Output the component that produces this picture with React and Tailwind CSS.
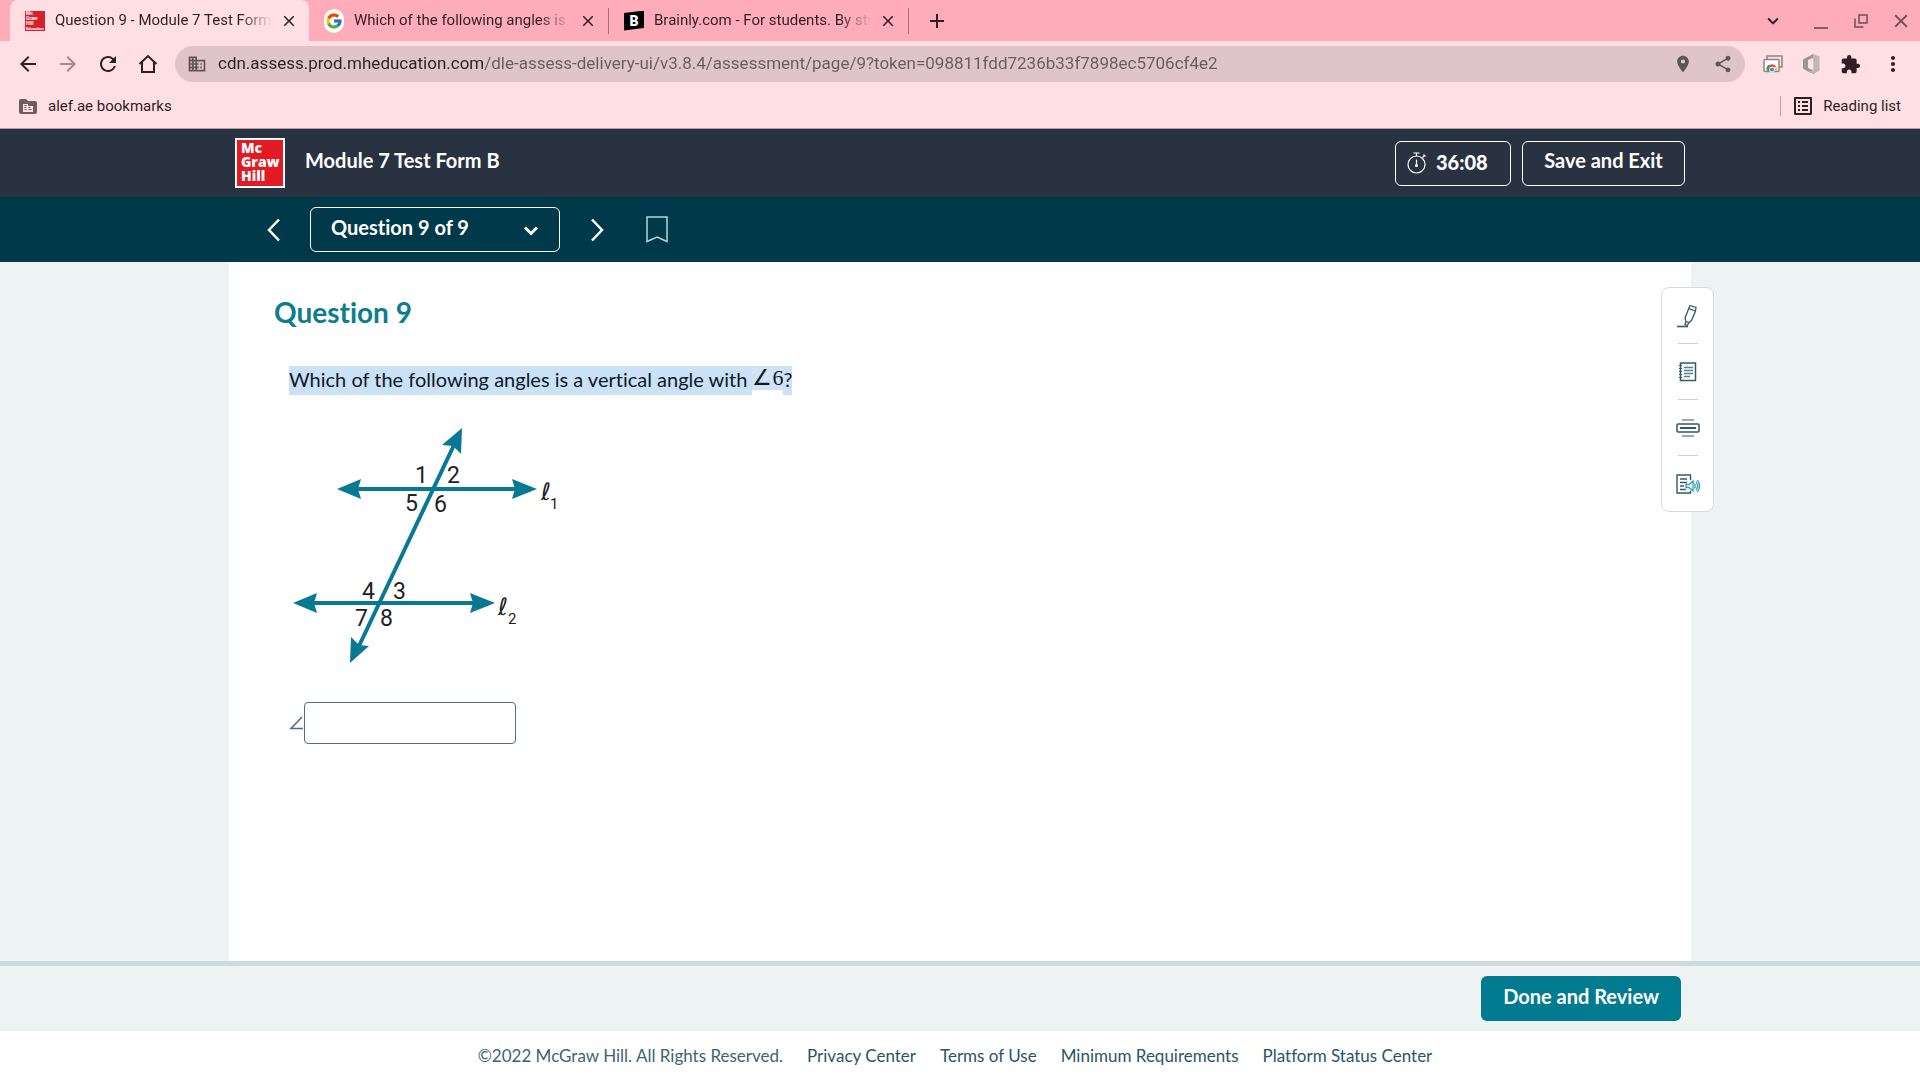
import { FcGoogle } from 'react-icons/fc';
import {
    MdAdd,
    MdArrowBack,
    MdArrowForward,
    MdClose,
    MdDomain,
    MdExpandMore,
    MdExtension,
    MdLocationOn,
    MdMoreVert,
    MdOutlineListAlt,
    MdRefresh,
    MdShare,
} from 'react-icons/md';

const tabs = [
    { title: 'Question 9 - Module 7 Test Form', icon: <SmallLogo />, active: true },
    { title: 'Which of the following angles is a', icon: <GoogleIcon /> },
    { title: 'Brainly.com - For students. By stu', icon: <BrainlyIcon /> },
];

const footerLinks = ['Privacy Center', 'Terms of Use', 'Minimum Requirements', 'Platform Status Center'];

const tools = [
    { label: 'Highlighter', icon: <HighlighterIcon /> },
    { label: 'Notepad', icon: <NotepadIcon /> },
    { label: 'Line reader', icon: <LineReaderIcon /> },
    { label: 'Text to speech', icon: <SpeechIcon /> },
];

function SmallLogo() {
    return (
        <span className="block size-5 bg-[#d6202e] pl-px text-left text-[5px] leading-[5px] font-bold text-white">
            Mc<br />Graw<br />Hill<br /><span className="block text-[4px] leading-[5px]">Education</span>
        </span>
    )
}

function GoogleIcon() {
    return (
        <span className="flex h-6 w-5 items-center justify-center rounded-full bg-white">
            <FcGoogle size={18} />
        </span>
    )
}

function BrainlyIcon() {
    return (
        <span className="flex size-5 items-center justify-center bg-black font-['Roboto',sans-serif] text-sm font-black text-white [clip-path:polygon(0_12%,100%_0,100%_88%,0_100%)]">
            B
        </span>
    )
}

function HomeIcon() {
    return (
        <svg width="20" height="20" viewBox="0 0 20 20" fill="none" stroke="currentColor" strokeWidth="2">
            <path d="M1.500 10 10 2l8.500 8M4 8v10h12V8" />
        </svg>
    )
}

function BookmarkFolderIcon() {
    return (
        <svg width="18" height="18" viewBox="0 0 18 18">
            <path d="M2 2h5l2 2h7a2 2 0 0 1 2 2v9a2 2 0 0 1-2 2H2a2 2 0 0 1-2-2V4a2 2 0 0 1 2-2z" fill="#6b5e61" />
            <path d="M4 7h5v2h5v6H4z" fill="#ffdee4" />
            <path d="M5.500 8.500h2M5.500 10.500h2M5.500 12.500h2M9.500 10.500h2M9.500 12.500h3" stroke="#6b5e61" />
        </svg>
    )
}

function ScreensIcon() {
    return (
        <svg width="20" height="18" viewBox="0 0 20 18" fill="none">
            <path d="M4 4V1h15v11h-3" stroke="#8e8587" strokeWidth="1.500" />
            <rect x="1" y="4.500" width="15" height="12" rx="1" fill="#fff" stroke="#8e8587" strokeWidth="1.500" />
            <path d="M4 16a5 5 0 0 1 2-6.500l2.500 6.500z" fill="#34a853" />
            <path d="M4.500 12a5 5 0 0 1 9 0z" fill="#ea4335" />
            <path d="M13.500 12a5 5 0 0 1 .5 4H9z" fill="#fbbc04" />
            <circle cx="9" cy="14.500" r="2.500" fill="#4285f4" stroke="#fff" />
        </svg>
    )
}

function OfficeIcon() {
    return (
        <svg width="17" height="20" viewBox="0 0 17 20">
            <path d="M0 5.500 10 0v4L5 6v8l5.500 2.500V20L5 17.500 0 14.500z" fill="#9d9596" />
            <path d="M10 0l6.500 2.500v14L10.500 20l-6-2.500 6-1z" fill="#bdb6b7" />
        </svg>
    )
}

function RestoreIcon() {
    return (
        <svg width="14" height="14" viewBox="0 0 14 14" fill="none" stroke="currentColor" strokeWidth="1.500">
            <path d="M5 1h8v8H5zM1 4.500V13h8.500" />
        </svg>
    )
}

function Chevron({ d }) {
    return (
        <svg width="14" height="24" viewBox="0 0 14 24" fill="none" stroke="currentColor" strokeWidth="2.500">
            <path d={d} />
        </svg>
    )
}

function TimerIcon() {
    return (
        <svg width="20" height="22" viewBox="0 0 20 22" fill="none" stroke="currentColor" strokeWidth="1.200">
            <circle cx="9.500" cy="12.500" r="8.500" />
            <path d="M6.500 1h6M9.500 1v3M15.500 5.500l2-2M16.500 2.500l2 2M9.500 7.500v5" />
            <circle cx="9.500" cy="13.500" r="1" fill="currentColor" />
        </svg>
    )
}

function HighlighterIcon() {
    return (
        <svg width="24" height="24" viewBox="0 0 24 24" fill="none" stroke="#35596a" strokeWidth="1.300">
            <path d="m14 1.500 6 2-.5 3.500-4 9.500-2.500 2-3-1 -1-3.500 3.500-9zM12.800 4.700l6.700 2.300M10 17.500l-1 3 2.500.8 1.500-2.800" />
            <path d="M1 22.500h11" strokeWidth="1.600" />
        </svg>
    )
}

function NotepadIcon() {
    return (
        <svg width="24" height="24" viewBox="0 0 24 24" fill="none" stroke="#35596a">
            <path d="M4.500 3h15v17.500h-15z" strokeWidth="1.500" />
            <path d="M8 7.500h9M8 10.500h9M8 13.500h9M8 16.500h6" stroke="#5c7d8a" strokeWidth="1.300" />
            <path d="M3 5.500h3M3 8.500h3M3 11.500h3M3 14.500h3M3 17.500h3" strokeWidth="1.200" />
        </svg>
    )
}

function LineReaderIcon() {
    return (
        <svg width="24" height="24" viewBox="0 0 24 24" fill="none" stroke="#35596a">
            <rect x="1" y="8" width="22" height="8" rx="1" strokeWidth="1.500" />
            <path d="M4 12h16" strokeWidth="2" />
            <path d="M6 4h12M6 20h12" strokeWidth="1.200" />
        </svg>
    )
}

function SpeechIcon() {
    return (
        <svg width="24" height="24" viewBox="0 0 24 24" fill="none" stroke="#35596a">
            <path d="M14.500 8V3H1v18h13.500v-2" strokeWidth="1.400" />
            <path d="M4 7h7M4 10.500h7M4 14h4M4 17.500h6" strokeWidth="1.300" />
            <g stroke="#2f9db5" strokeWidth="1.300">
                <path d="M10 12.500h3l4-3.500v10l-4-3.500h-3zM18.500 11.500q1.500 2.500 0 5M20 9.500q3 4.500 0 9M21.500 8q4 6 0 12" />
            </g>
        </svg>
    )
}

function AnglesFigure() {
    return (
        <svg
            role="img"
            aria-label="Two lines cut by a transversal"
            width="280"
            height="250"
            viewBox="0 0 280 250"
            className="block font-['Roboto',sans-serif]"
            fill="#222"
        >
            <g stroke="#087894" strokeWidth="4">
                <path d="M65 69h166M22 183h165M165 25 70 226" />
            </g>
            <g fill="#087894">
                <path d="M48 69l24-10-3 10 3 10zM248 69l-25-10 3 10-3 10z" />
                <path d="M4 183l24-10-3 10 3 10zM206 183l-25-10 3 10-3 10z" />
                <path d="M173 8l-20 17 11 1 8 8zM61 243l1-26 8 8 10 1z" />
            </g>
            <g fontSize="23">
                <text x="126" y="63">1</text>
                <text x="158" y="63">2</text>
                <text x="116" y="91">5</text>
                <text x="145" y="92">6</text>
                <text x="73" y="179">4</text>
                <text x="104" y="179">3</text>
                <text x="66" y="206">7</text>
                <text x="91" y="206">8</text>
            </g>
            <g className="font-['DejaVu_Sans',sans-serif]" fontSize="24">
                <text x="252" y="80">ℓ</text>
                <text x="209" y="195">ℓ</text>
            </g>
            <g fontSize="15">
                <text x="261" y="89">1</text>
                <text x="219" y="204">2</text>
            </g>
        </svg>
    )
}

function Tab({ title, icon, active }) {
    return (
        <div className={active
            ? 'flex h-full w-[299px] items-center rounded-t-lg bg-[#ffdee4] pr-[11px] pl-[15px]'
            : 'flex h-full w-[299px] items-center pr-[11px] pl-[15px]'}
        >
            <button role="tab" aria-selected={Boolean(active)} className="flex min-w-0 flex-1 items-center gap-[10px]">
                {icon}
                <span className="flex-1 overflow-hidden text-left whitespace-nowrap [mask-image:linear-gradient(to_right,black_85%,transparent)]">
                    {title}
                </span>
            </button>
            <button aria-label="Close tab" className="ml-2 shrink-0"><MdClose size={18} /></button>
        </div>
    )
}

function Browser() {
    return (
        <header className="border-b border-[#a8a0ab] bg-[#ffdee4] font-['Roboto',sans-serif] text-[15px] text-[#2e1f23]">
            <div className="flex h-[41px] items-center justify-between bg-[#ffacba] pl-[10px] pr-2">
                <div role="tablist" className="flex h-full items-center">
                    {tabs.map((tab, index) => (
                        <div key={tab.title} className="flex h-full items-center">
                            <Tab {...tab} />
                            {index > 0 && <span className="h-[26px] w-px bg-[#a5737e]" />}
                        </div>
                    ))}
                    <button aria-label="New tab" className="ml-4"><MdAdd size={24} /></button>
                </div>
                <div className="flex items-center text-[#6b5257]">
                    <button aria-label="Search tabs" className="mr-[30px] text-[#2e1f23]"><MdExpandMore size={22} /></button>
                    <button aria-label="Minimize" className="mr-[26px] flex h-4 w-[14px] items-end"><span className="h-[2px] w-full bg-[#7d5f66]" /></button>
                    <button aria-label="Restore" className="mr-[22px]"><RestoreIcon /></button>
                    <button aria-label="Close"><MdClose size={22} /></button>
                </div>
            </div>
            <div className="flex h-[46px] items-center pl-4 pr-[19px]">
                <div className="flex w-[159px] gap-4">
                    <button aria-label="Back"><MdArrowBack size={24} /></button>
                    <button aria-label="Forward" className="text-[#a08a8f]"><MdArrowForward size={24} /></button>
                    <button aria-label="Reload"><MdRefresh size={24} /></button>
                    <button aria-label="Home" className="ml-[2px]"><HomeIcon /></button>
                </div>
                <div className="flex h-9 min-w-0 flex-1 items-center rounded-full bg-[#dfc4ca] px-3 text-[#5f5457]">
                    <MdDomain size={20} className="shrink-0" />
                    <input
                        aria-label="Address"
                        defaultValue="cdn.assess.prod.mheducation.com/dle-assess-delivery-ui/v3.8.4/assessment/page/9?token=098811fdd7236b33f7898ec5706cf4e2"
                        className="ml-[11px] min-w-0 flex-1 bg-[linear-gradient(90deg,#2e1f23_266px,#6b5a5f_266px)] bg-clip-text text-[17px] text-transparent outline-none"
                    />
                    <button aria-label="Location"><MdLocationOn size={20} /></button>
                    <button aria-label="Share" className="ml-5"><MdShare size={20} /></button>
                </div>
                <div className="ml-[18px] flex items-center gap-5">
                    <button aria-label="Screens"><ScreensIcon /></button>
                    <button aria-label="Office"><OfficeIcon /></button>
                    <button aria-label="Extensions"><MdExtension size={21} /></button>
                    <button aria-label="Menu" className="-mr-1"><MdMoreVert size={24} /></button>
                </div>
            </div>
            <div className="flex h-[41px] items-center justify-between pb-[3px] pl-[19px] pr-[19px]">
                <a href="#bookmarks" className="flex items-center gap-[11px]"><BookmarkFolderIcon />alef.ae bookmarks</a>
                <button className="flex items-center gap-2">
                    <span className="h-5 w-px bg-[#c79aa4]" />
                    <MdOutlineListAlt size={24} className="ml-[2px]" />
                    Reading list
                </button>
            </div>
        </header>
    )
}

function TopBar() {
    return (
        <div className="bg-[#293241] text-white">
            <div className="mx-auto flex h-[68px] max-w-[1462px] items-center px-[6px]">
                <div className="size-[50px] border-2 border-white bg-[#e21a23] pt-px pl-[4px] font-['Open_Sans',sans-serif] text-[14px] leading-[14px] font-extrabold">
                    Mc<br />Graw<br />Hill
                </div>
                <h1 className="ml-5 flex-1 pb-[6px] text-xl font-bold">Module 7 Test Form B</h1>
                <button className="mr-[11px] flex h-[45px] w-[116px] items-center rounded-md border border-white pl-[11px] text-xl font-black">
                    <TimerIcon />
                    <span className="ml-[9px] pb-[3px]">36:08</span>
                </button>
                <button className="h-[45px] w-[163px] rounded-md border border-white pb-[6px] text-xl font-bold">Save and Exit</button>
            </div>
        </div>
    )
}

function QuestionNav() {
    return (
        <nav className="bg-[#003a4a] text-white">
            <div className="mx-auto flex h-[65px] max-w-[1462px] items-center px-[38px]">
                <button aria-label="Previous question"><Chevron d="M12 1.500 2 12l10 10.500" /></button>
                <div className="relative ml-[29px]">
                    <select aria-label="Question" className="block h-[45px] w-[250px] appearance-none rounded-md border border-white bg-transparent pb-[6px] pl-5 text-xl font-bold">
                        <option>Question 9 of 9</option>
                    </select>
                    <svg className="pointer-events-none absolute top-[19px] right-[22px]" width="14" height="10" viewBox="0 0 14 10" fill="none" stroke="currentColor" strokeWidth="3">
                        <path d="m1 1.500 6 6 6-6" />
                    </svg>
                </div>
                <button aria-label="Next question" className="ml-[30px]"><Chevron d="m2 1.500 10 10.500L2 22.500" /></button>
                <button aria-label="Bookmark" className="ml-[42px]">
                    <svg width="22" height="27" viewBox="0 0 22 27" fill="none" stroke="#b5d3da" strokeWidth="1.500">
                        <path d="M1 1h20v24.500L11 21 1 25.500z" />
                    </svg>
                </button>
            </div>
        </nav>
    )
}

function Toolbox() {
    return (
        <aside className="absolute top-[25px] -right-[23px] flex w-[53px] flex-col items-center rounded-lg border border-[#d3dcde] bg-white">
            {tools.map((tool, index) => (
                <div key={tool.label} className="flex flex-col items-center">
                    {index > 0 && <span className="h-px w-5 bg-[#c9d0d2]" />}
                    <button aria-label={tool.label} className="flex h-[55px] items-center">{tool.icon}</button>
                </div>
            ))}
        </aside>
    )
}

function Question() {
    return (
        <main className="flex flex-1 flex-col bg-[#edf2f2]">
            <section className="relative mx-auto w-full max-w-[1462px] flex-1 bg-white px-[45px] pt-8 pb-8">
                <h2 className="text-[28px] leading-9 font-bold text-[#0b7d8c]">Question 9</h2>
                <div className="px-[15px] pt-9">
                    <p className="flex items-start text-xl leading-[26px] text-[#0c1b26]">
                        <span className="bg-[#cbe1f7] pb-[3px] whitespace-pre">Which of the following angles is a vertical angle with </span>
                        <span className="bg-[#d3e3f5] font-['Liberation_Serif',serif] text-[22px] leading-6">∠6</span>
                        <span className="bg-[#cbe1f7] pb-[3px]">?</span>
                    </p>
                    <div className="pt-[25px]"><AnglesFigure /></div>
                    <div className="mt-8 flex items-center">
                        <label htmlFor="answer" className="w-[15px]">
                            <svg aria-label="angle" width="15" height="14" viewBox="0 0 15 14" fill="none" stroke="#4b7480" strokeWidth="1.600">
                                <path d="M13 1 2 12.500h12" />
                            </svg>
                        </label>
                        <input id="answer" type="text" className="h-[42px] w-[212px] rounded-[4px] border border-[#54707d] bg-white px-3 text-xl" />
                    </div>
                </div>
                <Toolbox />
            </section>
        </main>
    )
}

function Footer() {
    return (
        <footer>
            <div className="border-t-[5px] border-[#cfdadc] bg-[#edf2f2]">
                <div className="mx-auto flex max-w-[1462px] justify-end px-[10px] pt-[10px] pb-[10px]">
                    <button className="h-[45px] rounded-md bg-[#007b8f] px-[22px] pb-[6px] text-xl font-bold text-white">Done and Review</button>
                </div>
            </div>
            <div className="flex h-[49px] items-center justify-center gap-6 pr-[10px] text-[17px] text-[#3d6473]">
                <span>©2022 McGraw Hill. All Rights Reserved.</span>
                {footerLinks.map((link) => (
                    <a key={link} href="#footer" className="text-[#2a5566]">{link}</a>
                ))}
            </div>
        </footer>
    )
}

function App() {
    return (
        <div className="flex min-h-screen flex-col bg-white font-['Lato',sans-serif] [font-variant-ligatures:none]">
            <Browser />
            <TopBar />
            <QuestionNav />
            <Question />
            <Footer />
        </div>
    )
}

export default App
